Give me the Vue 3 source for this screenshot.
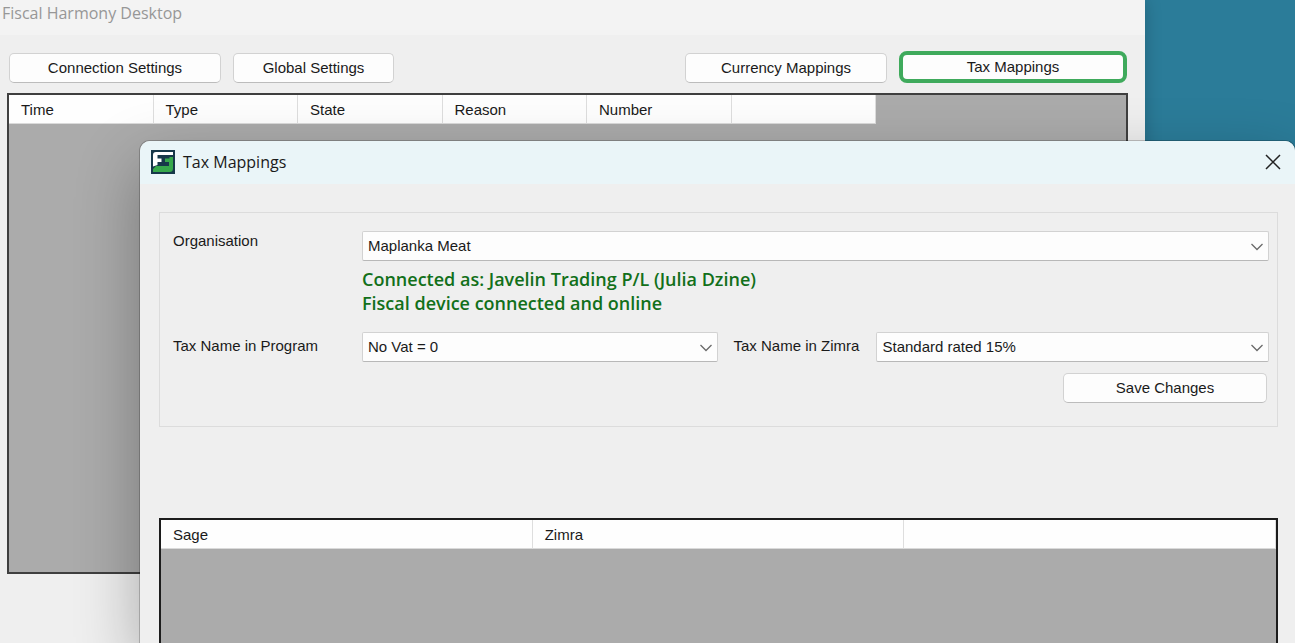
<script setup>
import { ref } from 'vue'

const eventColumns = ['Time', 'Type', 'State', 'Reason', 'Number', '']
const mappingColumns = ['Sage', 'Zimra', '']

const organisation = ref('Maplanka Meat')
const programTax = ref('No Vat = 0')
const zimraTax = ref('Standard rated 15%')
</script>

<template>
  <div class="desktop">
    <main class="window">
      <header class="window-title">Fiscal Harmony Desktop</header>
      <nav class="toolbar">
        <button type="button" class="btn connection">Connection Settings</button>
        <button type="button" class="btn global">Global Settings</button>
        <span class="spacer"></span>
        <button type="button" class="btn currency">Currency Mappings</button>
        <button type="button" class="btn tax">Tax Mappings</button>
      </nav>
      <div class="grid-view events">
        <table class="event-table">
          <thead>
            <tr>
              <th v-for="(c, i) in eventColumns" :key="i" scope="col">{{ c }}</th>
            </tr>
          </thead>
        </table>
      </div>
    </main>

    <section class="dialog" role="dialog" aria-labelledby="dialog-title">
      <header class="dialog-bar">
        <svg class="logo" viewBox="0 0 24 24" aria-hidden="true">
          <rect width="24" height="24" fill="#17384a" />
          <path d="M2 5Q2 2 5 2H22V5H6.500V8.500H10.500V12H6.500V15L2 16.500Z" fill="#fff" />
          <path d="M22 7V18.500Q22 22 18.500 22H2V19L5 16H18V12H14V8.500H18.500V7Z" fill="#37a84c" />
        </svg>
        <h1 id="dialog-title">Tax Mappings</h1>
        <button type="button" class="close" aria-label="Close">
          <svg viewBox="0 0 16 16" aria-hidden="true">
            <path d="M1 1L15 15M15 1L1 15" fill="none" stroke="#222" stroke-width="1.500" />
          </svg>
        </button>
      </header>

      <div class="dialog-body">
        <form class="panel" @submit.prevent>
          <label for="organisation" class="top">Organisation</label>
          <div class="field wide">
            <select id="organisation" v-model="organisation">
              <option>Maplanka Meat</option>
            </select>
            <svg class="chevron" viewBox="0 0 12 8" aria-hidden="true">
              <path d="M0.500 1L6 6.500L11.500 1" />
            </svg>
          </div>
          <div class="status">
            <p>Connected as: Javelin Trading P/L (Julia Dzine)</p>
            <p>Fiscal device connected and online</p>
          </div>
          <label for="program-tax">Tax Name in Program</label>
          <div class="field">
            <select id="program-tax" v-model="programTax">
              <option>No Vat = 0</option>
            </select>
            <svg class="chevron" viewBox="0 0 12 8" aria-hidden="true">
              <path d="M0.500 1L6 6.500L11.500 1" />
            </svg>
          </div>
          <label for="zimra-tax" class="second">Tax Name in Zimra</label>
          <div class="field">
            <select id="zimra-tax" v-model="zimraTax">
              <option>Standard rated 15%</option>
            </select>
            <svg class="chevron" viewBox="0 0 12 8" aria-hidden="true">
              <path d="M0.500 1L6 6.500L11.500 1" />
            </svg>
          </div>
          <button type="submit" class="btn save">Save Changes</button>
        </form>

        <div class="grid-view mappings">
          <table class="mapping-table">
            <thead>
              <tr>
                <th v-for="(c, i) in mappingColumns" :key="i" scope="col">{{ c }}</th>
              </tr>
            </thead>
          </table>
        </div>
      </div>
    </section>
  </div>
</template>

<style>
body {
  margin: 0;
}
</style>

<style scoped>
* {
  box-sizing: border-box;
}

.desktop {
  position: relative;
  height: 100vh;
  overflow: hidden;
  background: #2b7c99;
  color: #1a1a1a;
  font: 15px/20px "Liberation Sans", Arial, sans-serif;
}

.window {
  display: flex;
  flex-direction: column;
  height: 100%;
  margin-right: 150px;
  background: #efefef;
  box-shadow: 0 0 16px rgba(0, 0, 0, 0.2);
}

.window-title {
  height: 35px;
  padding: 1px 2px;
  background: #f3f3f3;
  color: #979797;
  font: 16px/24px "Open Sans", "Noto Sans", sans-serif;
}

.toolbar {
  display: flex;
  align-items: flex-end;
  gap: 12px;
  height: 58px;
  padding: 0 18px 10px 9px;
}

.spacer {
  flex: 1;
}

.btn {
  height: 30px;
  padding: 0 8px;
  border: 1px solid #d2d2d2;
  border-bottom-color: #bcbcbc;
  border-radius: 5px;
  background: #fdfdfd;
  color: inherit;
  font: inherit;
}

.connection {
  width: 212px;
}

.global {
  width: 161px;
}

.currency {
  width: 202px;
}

.tax {
  width: 228px;
  height: 32px;
  border: 4px solid #3faa5c;
  border-radius: 8px;
}

.grid-view {
  background: #ababab;
}

.events {
  height: 481px;
  margin: 0 17px 0 7px;
  border: 2px solid #3f3f3f;
}

table {
  border-collapse: separate;
  border-spacing: 0;
  table-layout: fixed;
}

th {
  height: 29px;
  padding: 2px 12px 0;
  border-right: 1px solid #dedede;
  border-bottom: 1px solid #dadada;
  background: #fefefe;
  font-weight: 400;
  text-align: left;
}

.event-table {
  width: 867px;
}

.mapping-table {
  width: 100%;
}

.dialog {
  position: absolute;
  top: 141px;
  right: 0;
  bottom: 0;
  left: 140px;
  border-radius: 10px 10px 0 0;
  background: #efefef;
  box-shadow: 0 0 0 1px rgba(0, 0, 0, 0.2), 0 24px 64px rgba(0, 0, 0, 0.3);
}

.dialog-bar {
  display: flex;
  align-items: center;
  height: 43px;
  padding: 0 14px 2px 11px;
  border-radius: 10px 10px 0 0;
  background: #eaf5f8;
}

.logo {
  width: 24px;
  height: 24px;
}

h1 {
  flex: 1;
  margin: 0 0 0 8px;
  font: 400 16px/24px "Open Sans", "Noto Sans", sans-serif;
}

.close {
  display: flex;
  padding: 0;
  border: 0;
  background: none;
}

.close svg {
  width: 16px;
  height: 16px;
}

.dialog-body {
  display: flex;
  flex-direction: column;
  padding: 28px 17px 0 19px;
}

.panel {
  display: grid;
  grid-template-columns: 189px 356fr 158px 392fr;
  align-content: start;
  align-items: start;
  min-height: 215px;
  padding: 18px 8px 0 13px;
  border: 1px solid #dcdcdc;
}

label {
  padding-top: 4px;
}

.top {
  padding-top: 0;
}

.second {
  padding-left: 15px;
}

.field {
  position: relative;
}

.wide {
  grid-column: 2 / -1;
}

select {
  display: block;
  width: 100%;
  height: 30px;
  padding: 0 32px 0 5px;
  appearance: none;
  border: 1px solid #d2d2d2;
  border-bottom-color: #b8b8b8;
  border-radius: 2px;
  background: #fdfdfd;
  color: inherit;
  font: inherit;
}

.chevron {
  position: absolute;
  top: 12px;
  right: 6px;
  width: 12px;
  height: 8px;
  fill: none;
  stroke: #6a6a6a;
  stroke-width: 1.3;
  pointer-events: none;
}

.status {
  grid-column: 2 / -1;
  padding: 6px 0 17px;
  color: #12701a;
  font: 600 18px/24px "Open Sans", "Noto Sans", sans-serif;
}

.status p {
  margin: 0;
}

.save {
  grid-column: 4;
  justify-self: end;
  width: 204px;
  margin: 11px 2px 0 0;
}

.mappings {
  height: 480px;
  margin-top: 91px;
  border: 2px solid #1c1c1c;
}
</style>
